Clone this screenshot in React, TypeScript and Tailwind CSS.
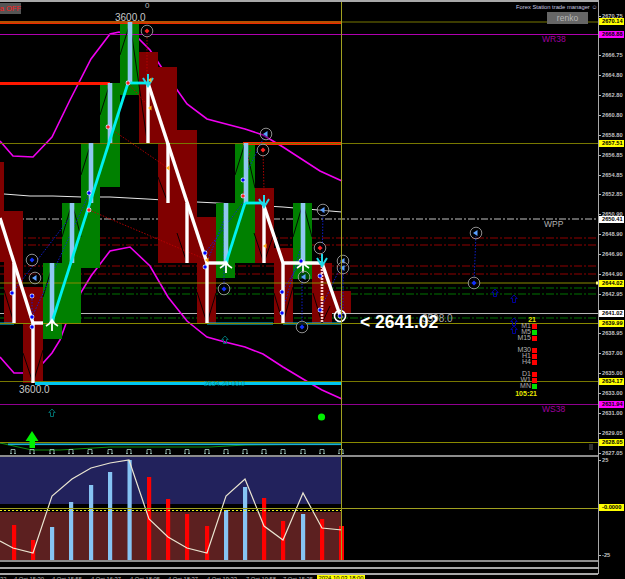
const bricks = [
  { x: 0, w: 4, top: 162, bottom: 262, up: false },
  { x: 4, w: 19, top: 211, bottom: 323, up: false },
  { x: 23, w: 20, top: 287, bottom: 383, up: false },
  { x: 43, w: 19, top: 263, bottom: 339, up: true },
  { x: 62, w: 19, top: 203, bottom: 323, up: true },
  { x: 81, w: 19, top: 143, bottom: 268, up: true },
  { x: 100, w: 20, top: 83, bottom: 187, up: true },
  { x: 120, w: 19, top: 22, bottom: 95, up: true },
  { x: 139, w: 19, top: 52, bottom: 143, up: false },
  { x: 158, w: 19, top: 67, bottom: 263, up: false },
  { x: 177, w: 20, top: 130, bottom: 263, up: false },
  { x: 197, w: 19, top: 217, bottom: 323, up: false },
  { x: 216, w: 19, top: 203, bottom: 278, up: true },
  { x: 235, w: 20, top: 143, bottom: 263, up: true },
  { x: 255, w: 19, top: 188, bottom: 263, up: false },
  { x: 274, w: 19, top: 248, bottom: 323, up: false },
  { x: 293, w: 19, top: 203, bottom: 279, up: true },
  { x: 312, w: 20, top: 263, bottom: 323, up: false },
  { x: 332, w: 19, top: 291, bottom: 313, up: false },
]

const upperBand = "0,141 13,156 33,157 52,137 70,100 91,59 110,34 119,32 139,39 150,50 168,77 187,104 207,119 245,129 263,135 283,147 320,171 342,181"
const lowerBand = "0,357 14,373 23,373 43,363 52,353 60,340 72,307 91,276 110,251 130,247 150,266 168,297 187,321 207,337 225,342 245,347 263,354 283,367 308,382 322,390 342,399"
const midBand = "4,194 30,196 53,196 82,197 110,197 147,199 197,202 217,203 283,207 342,212"
const oscLine = "0,541 13,548 33,553 52,496 72,479 91,468 110,463 129,460 149,519 168,537 187,548 207,553 226,496 245,479 264,526 283,540 303,493 322,528 342,530"

const blackLegs = [
  [130, 23, 120, 55], [130, 23, 147, 140], [110, 83, 100, 115], [91, 143, 81, 175],
  [245, 143, 235, 175], [245, 143, 255, 188], [72, 203, 62, 237], [72, 203, 81, 237], [53, 263, 43, 297],
  [33, 383, 23, 353], [33, 383, 43, 350], [207, 323, 197, 292], [207, 323, 216, 293],
  [283, 323, 274, 293], [283, 323, 293, 287], [303, 203, 293, 237], [303, 203, 312, 237],
  [322, 323, 313, 293], [322, 323, 330, 306], [14, 323, 4, 290], [187, 263, 177, 233],
  [264, 263, 254, 233], [264, 263, 274, 233], [168, 203, 158, 177], [332, 316, 340, 312],
]

const whiteRuns = [
  [0, 218, 33, 323], [14, 263, 14, 323], [33, 323, 33, 383], [33, 323, 43, 323],
  [148, 83, 207, 263], [148, 83, 148, 143], [168, 143, 168, 203], [187, 203, 187, 263],
  [207, 263, 226, 263], [207, 263, 207, 323], [263, 203, 283, 263], [264, 203, 264, 263],
  [283, 263, 322, 263], [283, 263, 283, 323], [322, 263, 341, 318],
]

const blueRuns = [
  [52, 263, 52, 323], [72, 203, 72, 263], [91, 143, 91, 203], [110, 83, 110, 143],
  [130, 22, 130, 83], [226, 203, 226, 263], [246, 143, 246, 203], [303, 203, 303, 263],
]

const cyanRuns = [
  [52, 322, 128, 83], [128, 83, 148, 83], [226, 263, 245, 203], [245, 203, 265, 203],
]

const blueDots = [
  [12, 293, 72, 215], [32, 317, 91, 190], [32, 296, 32, 327], [205, 253, 245, 200], [205, 267, 224, 220],
  [224, 289, 224, 210], [282, 313, 303, 240], [282, 292, 301, 261], [302, 327, 302, 240],
  [320, 310, 343, 262], [340, 316, 343, 262], [322, 276, 323, 210], [476, 233, 474, 283],
  [343, 262, 343, 318], [90, 193, 92, 165], [243, 180, 265, 135],
]

const redDots = [
  [89, 210, 207, 260], [108, 127, 168, 168], [128, 83, 150, 108], [147, 31, 147, 75], [263, 150, 264, 190],
  [320, 248, 320, 258], [243, 196, 250, 150],
]

const rings = [
  { x: 147, y: 31, kind: "red" }, { x: 266, y: 134, kind: "tri" }, { x: 263, y: 150, kind: "red" },
  { x: 32, y: 260, kind: "blue" }, { x: 35, y: 278, kind: "tri" }, { x: 224, y: 289, kind: "blue" },
  { x: 302, y: 327, kind: "blue" }, { x: 304, y: 277, kind: "tri" }, { x: 323, y: 210, kind: "tri" },
  { x: 320, y: 248, kind: "red" }, { x: 343, y: 261, kind: "tri" }, { x: 343, y: 268, kind: "tri" },
  { x: 476, y: 233, kind: "tri" }, { x: 474, y: 283, kind: "blue" },
]

const marks = [
  { x: 89, y: 193, c: "#0000ff" }, { x: 108, y: 127, c: "#ff2020" }, { x: 128, y: 83, c: "#ff2020" },
  { x: 243, y: 180, c: "#0000ff" }, { x: 243, y: 196, c: "#ff2020" }, { x: 89, y: 210, c: "#ff2020" },
  { x: 12, y: 293, c: "#0000ff" }, { x: 32, y: 296, c: "#0000ff" }, { x: 32, y: 317, c: "#0000ff" },
  { x: 32, y: 327, c: "#0000ff" }, { x: 205, y: 253, c: "#0000ff" }, { x: 205, y: 267, c: "#0000ff" },
  { x: 282, y: 292, c: "#0000ff" }, { x: 282, y: 313, c: "#0000ff" }, { x: 301, y: 261, c: "#0000ff" },
  { x: 320, y: 276, c: "#0000ff" }, { x: 320, y: 310, c: "#0000ff" }, { x: 340, y: 316, c: "#0000ff" },
]

const orangeMarks = [[150, 80], [150, 108], [168, 168], [207, 260], [265, 246], [322, 298]]
const hollowArrows = [
  { x: 495, y: 293, c: "#0000b0" }, { x: 514, y: 299, c: "#0000b0" }, { x: 514, y: 322, c: "#0000b0" },
  { x: 514, y: 330, c: "#0000b0" }, { x: 225, y: 340, c: "#007878" }, { x: 52, y: 413, c: "#007878" },
]
const whiteArrows = [[52, 320], [226, 262], [303, 262]]
const cyanArrows = [[148, 74], [264, 195], [322, 254]]
const tickGlyphs = [13, 32, 52, 71, 90, 110, 129, 149, 168, 187, 207, 226, 245, 264, 283, 303, 322, 341]

const bars = [
  { x: 14, top: 525, up: false }, { x: 33, top: 540, up: false }, { x: 52, top: 527, up: true },
  { x: 71, top: 502, up: true }, { x: 91, top: 485, up: true }, { x: 110, top: 472, up: true },
  { x: 129.5, top: 460, up: true }, { x: 149, top: 477, up: false }, { x: 168, top: 499, up: false },
  { x: 187, top: 514, up: false }, { x: 207, top: 526, up: false }, { x: 226, top: 510, up: true },
  { x: 245, top: 487, up: true }, { x: 264, top: 498, up: false }, { x: 283, top: 521, up: false },
  { x: 303, top: 514, up: true }, { x: 322, top: 519, up: false }, { x: 341, top: 526, up: false },
]

const priceLabels = [
  { y: 16, t: "2670.75" }, { y: 21, t: "2670.14", bg: "bg-[#ffff00]" }, { y: 34, t: "2668.88", bg: "bg-[#ff00ff]" },
  { y: 55, t: "2666.75" }, { y: 75, t: "2664.80" }, { y: 95, t: "2662.80" }, { y: 115, t: "2660.80" },
  { y: 135, t: "2658.80" }, { y: 143, t: "2657.51", bg: "bg-[#ffff00]" }, { y: 155, t: "2656.85" },
  { y: 175, t: "2654.85" }, { y: 194, t: "2652.85" }, { y: 214, t: "2650.90" },
  { y: 219, t: "2650.41", bg: "bg-white" }, { y: 234, t: "2648.90" }, { y: 254, t: "2646.90" },
  { y: 274, t: "2644.90" }, { y: 283, t: "2644.02", bg: "bg-[#ffff00]" }, { y: 294, t: "2642.95" },
  { y: 313, t: "2641.02", bg: "bg-white" }, { y: 323, t: "2639.99", bg: "bg-[#ffff00]" }, { y: 333, t: "2638.95" },
  { y: 353, t: "2637.00" }, { y: 373, t: "2635.00" }, { y: 381, t: "2634.17", bg: "bg-[#ffff00]" },
  { y: 393, t: "2633.00" }, { y: 404, t: "2631.94", bg: "bg-[#ff00ff]" }, { y: 413, t: "2631.00" },
  { y: 433, t: "2629.05" }, { y: 442, t: "2628.05", bg: "bg-[#ffff00]" }, { y: 453, t: "2627.05" },
  { y: 460, t: "25" }, { y: 507, t: "-0.0000", bg: "bg-[#ffff00]" }, { y: 555, t: "-25" },
]

const timeLabels = [
  { x: 14, t: "4 Oct 15:30" }, { x: 52, t: "4 Oct 15:55" }, { x: 91, t: "4 Oct 16:37" }, { x: 130, t: "4 Oct 18:05" },
  { x: 168, t: "4 Oct 18:37" }, { x: 207, t: "4 Oct 19:33" }, { x: 246, t: "7 Oct 10:58" }, { x: 283, t: "7 Oct 15:35" },
]

const signalGroups = [
  [{ t: "M1", on: false }, { t: "M5", on: true }, { t: "M15", on: false }],
  [{ t: "M30", on: false }, { t: "H1", on: false }, { t: "H4", on: false }],
  [{ t: "D1", on: false }, { t: "W1", on: false }, { t: "MN", on: true }],
]

function Segments({ runs, color, width, dash }: { runs: number[][]; color: string; width: number; dash?: string }) {
  return (
    <g stroke={color} strokeWidth={width} strokeDasharray={dash}>
      {runs.map((r, i) => (
        <line key={i} x1={r[0]} y1={r[1]} x2={r[2]} y2={r[3]} />
      ))}
    </g>
  )
}

function Ring({ x, y, kind }: { x: number; y: number; kind: string }) {
  return (
    <g>
      <circle cx={x} cy={y} r={5.8} fill="#000" fillOpacity={kind === "tri" ? 0.4 : 0.7} stroke="#b0b0b0" strokeWidth={0.8} />
      {kind === "tri" ? (
        <path d={`M${x - 3} ${y} L${x + 1.5} ${y - 3} V${y + 3} Z`} fill="#5aa0ff" />
      ) : (
        <path d={`M${x} ${y - 2.5} L${x + 2.5} ${y} L${x} ${y + 2.5} L${x - 2.5} ${y} Z`} fill={kind === "red" ? "#ff2020" : "#1030ff"} />
      )}
    </g>
  )
}

function PriceChart() {
  return (
    <svg className="absolute inset-0 h-full w-full" viewBox="0 2 598 453">
      <line x1="0" y1="219" x2="598" y2="219" stroke="#d8d8d8" strokeWidth="0.9" strokeDasharray="7 2 2 2" />
      {[238, 245, 266, 274].map((y) => (
        <line key={y} x1="0" y1={y} x2="598" y2={y} stroke="#a00000" strokeWidth="0.9" strokeDasharray="8 2 2 2" />
      ))}
      {[288, 294, 318].map((y) => (
        <line key={y} x1="0" y1={y} x2="598" y2={y} stroke="#008000" strokeWidth="0.9" strokeDasharray="8 2 2 2" />
      ))}
      <line x1="0" y1="313.5" x2="598" y2="313.5" stroke="#b8b8b8" />
      <polyline points={midBand} fill="none" stroke="#e8e8e8" strokeWidth="1" />
      <polyline points={upperBand} fill="none" stroke="#f000f0" strokeWidth="1.6" />
      <polyline points={lowerBand} fill="none" stroke="#f000f0" strokeWidth="1.6" />

      {bricks.map((b) => (
        <rect key={b.x} x={b.x} y={b.top} width={b.w} height={b.bottom - b.top} fill={b.up ? "#008000" : "#800000"} />
      ))}

      <rect x="0" y="21" width="342" height="3" fill="#f02800" />
      <rect x="0" y="82" width="110" height="3" fill="#ff1800" />
      <rect x="243" y="142" width="99" height="3" fill="#ff2800" />
      <rect x="0" y="322.5" width="14" height="2" fill="#00c8f0" />
      <rect x="207" y="322.5" width="66" height="2" fill="#00c8f0" />
      <rect x="283" y="322.5" width="59" height="2" fill="#00c8f0" />
      <rect x="35" y="382" width="307" height="3" fill="#00c8f0" />

      <line x1="0" y1="22" x2="598" y2="22" stroke="#787800" />
      <line x1="0" y1="34.5" x2="598" y2="34.5" stroke="#b000b0" />
      <line x1="0" y1="143.5" x2="598" y2="143.5" stroke="#787800" />
      <line x1="0" y1="283" x2="598" y2="283" stroke="#8a8a00" />
      <line x1="0" y1="323.5" x2="598" y2="323.5" stroke="#8a8a00" />
      <line x1="0" y1="381.5" x2="598" y2="381.5" stroke="#787800" />
      <line x1="0" y1="404.5" x2="598" y2="404.5" stroke="#900090" />

      <Segments runs={blackLegs} color="#000" width={0.9} />
      <Segments runs={blueDots} color="#1020e0" width={0.9} dash="1.5 1.5" />
      <Segments runs={redDots} color="#c00000" width={0.9} dash="1.5 1.5" />
      <Segments runs={blueRuns} color="#90c8f0" width={4.6} />
      <Segments runs={whiteRuns} color="#fff" width={3.4} />
      <Segments runs={cyanRuns} color="#00f0f0" width={2.8} />

      <line x1="322" y1="263" x2="322" y2="323" stroke="#ffc8c8" strokeWidth="2.6" strokeDasharray="2 1" />

      {whiteArrows.map(([x, y]) => (
        <path key={x} d={`M${x} ${y + 11} V${y} M${x - 6} ${y + 6} Q${x - 2} ${y + 4} ${x} ${y} Q${x + 2} ${y + 4} ${x + 6} ${y + 6}`} fill="none" stroke="#fff" strokeWidth="1.8" />
      ))}
      {cyanArrows.map(([x, y]) => (
        <path key={x} d={`M${x} ${y} V${y + 12} M${x - 5} ${y + 4} L${x} ${y + 12} L${x + 5} ${y + 4}`} fill="none" stroke="#20d8e8" strokeWidth="2" />
      ))}

      {marks.map((m) => (
        <g key={`${m.x}-${m.y}`}>
          <circle cx={m.x} cy={m.y} r={2.4} fill="#c8d8f8" />
          <path d={`M${m.x} ${m.y - 2} L${m.x + 2} ${m.y} L${m.x} ${m.y + 2} L${m.x - 2} ${m.y} Z`} fill={m.c} />
        </g>
      ))}
      {orangeMarks.map(([x, y]) => (
        <path key={`${x}-${y}`} d={`M${x - 2} ${y} L${x + 1.5} ${y - 2.5} V${y + 2.5} Z`} fill="#ffb020" />
      ))}
      {rings.map((r) => (
        <Ring key={`${r.x}-${r.y}`} x={r.x} y={r.y} kind={r.kind} />
      ))}
      <circle cx="340" cy="316" r="5.5" fill="none" stroke="#fff" strokeWidth="1.6" />

      {hollowArrows.map((a) => (
        <path
          key={`${a.x}-${a.y}`}
          d={`M${a.x} ${a.y - 4} L${a.x + 3.2} ${a.y - 0.5} H${a.x + 1.5} V${a.y + 3.5} H${a.x - 1.5} V${a.y - 0.5} H${a.x - 3.2} Z`}
          fill="none"
          stroke={a.c}
          strokeWidth="0.9"
        />
      ))}

      <polyline points="0,443 32,450 60,450 110,447 150,447 210,447 245,445 342,444" fill="none" stroke="#109010" strokeWidth="1" />
      <rect x="0" y="442" width="342" height="1.2" fill="#109a70" />
      <rect x="8" y="443.5" width="334" height="1.6" fill="#18b0d8" />
      <line x1="0" y1="442.5" x2="598" y2="442.5" stroke="#8a8a00" />
      <path d="M32 431 L38.5 441 H35 V448 H29.5 V441 H25.5 Z" fill="#00f000" />
      <circle cx="321.5" cy="417" r="3.6" fill="#00f000" />

      {tickGlyphs.map((x) => (
        <path key={x} d={`M${x - 2} 453.5 V449.5 H${x + 2} V453.5 M${x - 3} 453.5 H${x - 1} M${x + 1} 453.5 H${x + 3}`} fill="none" stroke="#a8d0c8" strokeWidth="0.8" />
      ))}
      <path d="M589 445 H593 M589 447 H593 M589 449 H593" stroke="#606060" strokeWidth="1" />
      <rect x="596" y="281.5" width="2" height="3" fill="#ffff80" />

      <line x1="341.5" y1="2" x2="341.5" y2="455" stroke="#a0a020" />
    </svg>
  )
}

function Oscillator() {
  return (
    <svg className="absolute inset-0 h-full w-full" viewBox="0 457 598 103">
      <rect x="0" y="457" width="342" height="47" fill="#22225c" />
      <rect x="0" y="512" width="342" height="48" fill="#5c2020" />
      {bars.map((b) => (
        <rect key={b.x} x={b.x - 2} y={b.top} width={b.x === 341 ? 5 : 4.2} height={560 - b.top} fill={b.up ? "#86c4f4" : "#ff0000"} />
      ))}
      <polyline points={oscLine} fill="none" stroke="#ebe6d2" strokeWidth="1.2" />
      <line x1="0" y1="508.5" x2="598" y2="508.5" stroke="#a0a020" />
      <line x1="0" y1="510.5" x2="341" y2="510.5" stroke="#f0f020" strokeDasharray="2 2" />
      <line x1="341.5" y1="457" x2="341.5" y2="560" stroke="#a0a020" />
    </svg>
  )
}

function SignalPanel() {
  return (
    <div className="absolute left-[503px] top-[314px] flex w-[34px] flex-col items-end text-[7px] leading-[6px] text-[#b0b0b0]">
      <span className="pr-[1px] text-[7px] leading-[7px] font-bold text-[#e8e800]">21</span>
      <div className="flex flex-col gap-[6px]">
        {signalGroups.map((group, i) => (
          <div key={i} className="flex flex-col">
            {group.map((s) => (
              <div key={s.t} className="flex items-center justify-end gap-[1px]">
                <span>{s.t}</span>
                <span className={`h-[5px] w-[5px] ${s.on ? "bg-[#00e000]" : "bg-[#ff0000]"}`} />
              </div>
            ))}
          </div>
        ))}
      </div>
      <span className="mt-[1px] text-[7px] leading-[8px] font-bold whitespace-nowrap text-[#e8e800]">105:21</span>
    </div>
  )
}

export default function App() {
  return (
    <div className="flex h-[579px] w-[625px] overflow-hidden bg-black font-['Liberation_Sans',sans-serif]">
      <div className="flex w-[598px] flex-col border-t-2 border-[#a8a8a8]">
        <div className="relative h-[453px] overflow-hidden">
          <PriceChart />
          <span className="absolute left-0 top-[1px] flex h-[11px] w-[21px] items-center justify-end bg-[#555] text-[7.5px] whitespace-nowrap text-[#ff2020]">a OFF</span>
          <span className="absolute left-[145px] top-0 text-[8px] leading-[8px] text-[#b8b8b8]">0</span>
          <span className="absolute left-[115px] top-[8px] text-[10px] text-[#c8c8c8]">3600.0</span>
          <span className="absolute left-[19px] top-[380px] text-[10px] text-[#c8c8c8]">3600.0</span>
          <span className="absolute left-[204px] top-[377px] text-[7px] text-[#008888]">2634.20 00.0</span>
          <span className="absolute left-[422px] top-[309px] text-[10px] text-[#a8a8a8]">3598.0</span>
          <span className="absolute left-[360px] top-[307px] text-[17.5px] font-bold whitespace-nowrap text-white">&lt; 2641.02</span>
          <span className="absolute left-[542px] top-[31px] text-[8.5px] text-[#a000a0]">WR38</span>
          <span className="absolute left-[544px] top-[216px] text-[8.5px] text-[#b0b0b0]">WPP</span>
          <span className="absolute left-[542px] top-[401px] text-[8.5px] text-[#a000a0]">WS38</span>
          <span className="absolute left-[516px] top-[1px] text-[5.8px] whitespace-nowrap text-[#c8c8e0]">Forex Station trade manager ☺</span>
          <span className="absolute left-[547px] top-[10px] flex h-[12px] w-[41px] items-center justify-center bg-[#666] text-[8.5px] text-[#b8b8b8]">renko</span>
          <SignalPanel />
        </div>
        <div className="h-[2px] bg-[#8c8c8c]" />
        <div className="relative h-[103px]">
          <Oscillator />
        </div>
        <div className="h-[2px] bg-[#8c8c8c]" />
        <div className="mt-[5px] h-[1.5px] bg-[#a8a8a8]" />
        <div className="mt-[4.5px] h-[1.5px] bg-[#a8a8a8]" />
        <div className="relative flex-1">
          {timeLabels.map((l) => (
            <span key={l.x} className="absolute top-[1px] whitespace-nowrap text-[5.8px] leading-[6px] text-[#b8b8b8]" style={{ left: l.x }}>
              {l.t}
            </span>
          ))}
          <span className="absolute left-0 top-[1px] whitespace-nowrap text-[5.8px] leading-[6px] text-[#b8b8b8]">32</span>
          <span className="absolute left-[317px] top-0 h-[6px] w-[48px] whitespace-nowrap bg-[#ffff00] text-center text-[5.8px] leading-[6px] text-black">2024.10.03 18:00</span>
        </div>
      </div>
      <div className="relative h-[574px] w-[27px] border-l border-[#a8a8a8]">
        {priceLabels.map((l) => (
          <div key={`${l.y}${l.t}`} className={`absolute left-0 flex h-[7px] w-[25px] items-center ${l.bg ?? ""}`} style={{ top: l.y - 3.5 }}>
            <span className={`h-px w-[2px] ${l.bg ? "" : "bg-[#b8b8b8]"}`} />
            <span className={`whitespace-nowrap px-px text-[5.7px] leading-[7px] font-bold ${l.bg ? "text-black" : "text-[#c0c0c0]"}`}>{l.t}</span>
          </div>
        ))}
      </div>
    </div>
  )
}
